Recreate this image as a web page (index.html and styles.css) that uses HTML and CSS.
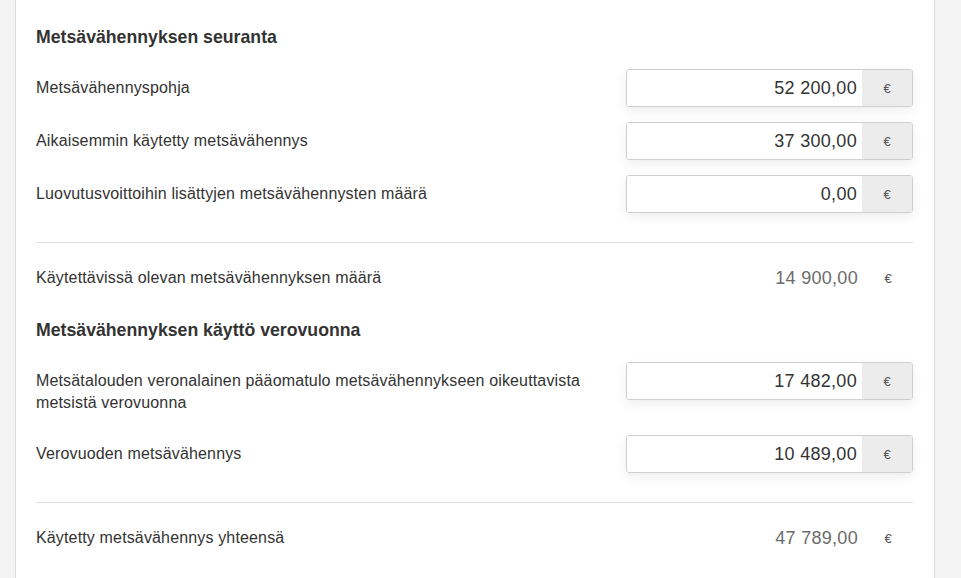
FILE: index.html
```html
<!DOCTYPE html>
<html>
    <head>
        <meta charset="utf-8">
        <link rel="stylesheet" href="styles.css">
    </head>
    <body>
        <div class="panel">
            <h3 class="section-title">Metsävähennyksen seuranta</h3>

            <div class="row">
                <label class="row-label">Metsävähennyspohja</label>
                <div class="money-input">
                    <input type="text" value="52 200,00">
                    <span class="unit">€</span>
                </div>
            </div>
            <div class="row">
                <label class="row-label">Aikaisemmin käytetty metsävähennys</label>
                <div class="money-input">
                    <input type="text" value="37 300,00">
                    <span class="unit">€</span>
                </div>
            </div>
            <div class="row">
                <label class="row-label">Luovutusvoittoihin lisättyjen metsävähennysten määrä</label>
                <div class="money-input">
                    <input type="text" value="0,00">
                    <span class="unit">€</span>
                </div>
            </div>

            <hr class="divider">

            <div class="row result">
                <span class="row-label">Käytettävissä olevan metsävähennyksen määrä</span>
                <div class="money-output">
                    <span class="amount">14 900,00</span>
                    <span class="unit">€</span>
                </div>
            </div>

            <h3 class="section-title">Metsävähennyksen käyttö verovuonna</h3>

            <div class="row tall">
                <label class="row-label">Metsätalouden veronalainen pääomatulo metsävähennykseen oikeuttavista metsistä verovuonna</label>
                <div class="money-input">
                    <input type="text" value="17 482,00">
                    <span class="unit">€</span>
                </div>
            </div>
            <div class="row">
                <label class="row-label">Verovuoden metsävähennys</label>
                <div class="money-input">
                    <input type="text" value="10 489,00">
                    <span class="unit">€</span>
                </div>
            </div>

            <hr class="divider">

            <div class="row result">
                <span class="row-label">Käytetty metsävähennys yhteensä</span>
                <div class="money-output">
                    <span class="amount">47 789,00</span>
                    <span class="unit">€</span>
                </div>
            </div>
        </div>
    </body>
</html>
```

FILE: styles.css
```css
body {
    font-family: "Liberation Sans", Arial, sans-serif;
    background-color: #f3f3f3;
    margin: 0;
    color: #333;
    overflow: hidden;
}

.panel {
    background-color: #fff;
    margin-left: 15px;
    width: 920px;
    border-left: 1px solid #d9d9d9;
    border-right: 1px solid #d9d9d9;
    padding: 27px 21px 40px 20px;
    box-sizing: border-box;
    height: 578px;
}

.section-title {
    font-size: 17.7px;
    line-height: 20px;
    font-weight: bold;
    margin: 0 0 22px 0;
    color: #333;
}

.row {
    display: flex;
    align-items: flex-start;
    justify-content: space-between;
    margin-bottom: 15px;
}
.row.tall {
    margin-bottom: 21px;
}

.row-label {
    width: 570px;
    font-size: 16px;
    letter-spacing: 0.15px;
    line-height: 22px;
    padding-top: 8px;
}

.money-input {
    display: flex;
    width: 287px;
    height: 38px;
    border: 1px solid #cfcfcf;
    border-radius: 3px;
    box-sizing: border-box;
    box-shadow: 0 4px 12px rgba(0, 0, 0, 0.07);
    overflow: hidden;
}
.money-input input {
    flex: 1;
    min-width: 0;
    border: none;
    outline: none;
    text-align: right;
    font-family: inherit;
    font-size: 18px;
    letter-spacing: 0.3px;
    color: #333;
    padding: 0 5px 0 0;
    background-color: #fff;
}
.money-input .unit {
    width: 50px;
    background-color: #ececec;
    font-size: 13px;
    color: #555;
    display: flex;
    align-items: center;
    justify-content: center;
}

.divider {
    border: none;
    border-top: 1px solid #dedede;
    margin: 29px 0 16px 0;
}

.result {
    margin-bottom: 23px;
}
.money-output {
    display: flex;
    width: 287px;
    height: 38px;
    align-items: center;
}
.money-output .amount {
    flex: 1;
    text-align: right;
    font-size: 18px;
    letter-spacing: 0.3px;
    color: #6b6b6b;
    padding-right: 5px;
}
.money-output .unit {
    width: 50px;
    text-align: center;
    font-size: 13px;
    color: #555;
}
```
